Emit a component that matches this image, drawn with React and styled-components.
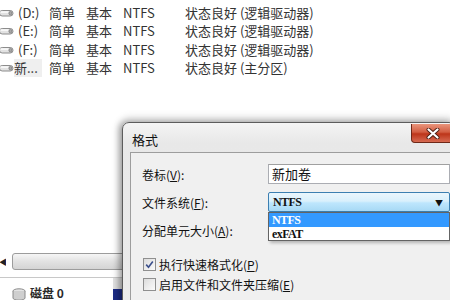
import React from "react";
import styled, { createGlobalStyle } from "styled-components";

const volumes = [
  { name: "(D:)", status: "状态良好 (逻辑驱动器)" },
  { name: "(E:)", status: "状态良好 (逻辑驱动器)" },
  { name: "(F:)", status: "状态良好 (逻辑驱动器)" },
  { name: "新...", status: "状态良好 (主分区)", selected: true },
];

const GlobalStyle = createGlobalStyle`
  body {
    margin: 0;
    background: #fff;
    font-family: "Noto Sans CJK SC", "Noto Sans", sans-serif;
  }
`;

const DriveIcon = () => (
  <svg width="15" height="8" viewBox="0 0 15 8">
    <rect x="0.5" y="1.5" width="13.5" height="5.5" rx="2.7" fill="#e2e2e2" stroke="#8c8c8c" />
    <rect x="1.5" y="2.2" width="8" height="1.8" fill="#f7f7f7" />
    <ellipse cx="11.4" cy="4.2" rx="1.5" ry="1.8" fill="#a8a8a8" stroke="#6c6c6c" strokeWidth="0.6" />
  </svg>
);

const DiskIcon = () => (
  <svg width="14" height="12" viewBox="0 0 14 12">
    <ellipse cx="7" cy="3" rx="6" ry="2.2" fill="#e4e4e4" stroke="#8a8a8a" />
    <path d="M1 3 V10 A6 2.2 0 0 0 13 10 V3" fill="#cfcfcf" stroke="#8a8a8a" />
  </svg>
);

const CloseGlyph = () => (
  <svg width="14" height="11" viewBox="0 0 14 11">
    <path d="M2.5 1.5 L11.5 9.5 M11.5 1.5 L2.5 9.5" stroke="#4a1e12" strokeWidth="4" strokeLinecap="round" />
    <path d="M2.5 1.5 L11.5 9.5 M11.5 1.5 L2.5 9.5" stroke="#fff" strokeWidth="2.2" strokeLinecap="round" />
  </svg>
);

const CheckGlyph = () => (
  <svg width="9" height="9" viewBox="0 0 9 9">
    <path d="M1.2 4.6 L3.5 7.2 L7.8 1.4" fill="none" stroke="#3b4f8c" strokeWidth="1.6" />
  </svg>
);

const App = () => {
  return (
    <Screen>
      <GlobalStyle />
      <VolumeList>
        {volumes.map((v) => (
          <VolumeRow key={v.name}>
            <DriveIcon />
            <VolumeName selected={v.selected}>{v.name}</VolumeName>
            <Cell>简单</Cell>
            <Cell>基本</Cell>
            <Cell>NTFS</Cell>
            <Cell>{v.status}</Cell>
          </VolumeRow>
        ))}
      </VolumeList>

      <ScrollBar>
        <ScrollArrow>◀</ScrollArrow>
        <ScrollThumb />
      </ScrollBar>

      <DiskRow>
        <DiskLabel>
          <DiskIcon />
          <span>磁盘 0</span>
        </DiskLabel>
        <Partition />
      </DiskRow>

      <Dialog>
        <TitleBar>
          <Title>格式</Title>
          <CloseButton>
            <CloseGlyph />
          </CloseButton>
        </TitleBar>
        <Body>
          <FormGrid>
            <Label>
              卷标(<u>V</u>):
            </Label>
            <TextBox>新加卷</TextBox>
            <Label>
              文件系统(<u>F</u>):
            </Label>
            <Select>
              <SelectValue>NTFS</SelectValue>
              <SelectArrow>▼</SelectArrow>
              <DropList>
                <DropItem active>NTFS</DropItem>
                <DropItem>exFAT</DropItem>
              </DropList>
            </Select>
            <Label>
              分配单元大小(<u>A</u>):
            </Label>
            <div />
          </FormGrid>
          <Options>
            <Option>
              <CheckBox>
                <CheckGlyph />
              </CheckBox>
              <span>
                执行快速格式化(<u>P</u>)
              </span>
            </Option>
            <Option>
              <CheckBox />
              <span>
                启用文件和文件夹压缩(<u>E</u>)
              </span>
            </Option>
          </Options>
        </Body>
      </Dialog>
    </Screen>
  );
};

const Screen = styled.div`
  position: relative;
  width: 450px;
  height: 300px;
  overflow: hidden;
  background: #fff;
  color: #2a2a2a;
`;

const VolumeList = styled.div`
  display: flex;
  flex-direction: column;
  padding-top: 4px;
`;

const VolumeRow = styled.div`
  display: grid;
  grid-template-columns: 16px 33px 37px 37px 62px 1fr;
  align-items: center;
  height: 18.3px;
  font-size: 13px;
  color: #333;
  white-space: nowrap;
  svg {
    margin-left: -1px;
  }
`;

const Cell = styled.span`
  line-height: 18px;
`;

const VolumeName = styled.span`
  line-height: 18px;
  margin-left: ${({ selected }) => (selected ? "-2px" : "2px")};
  background: ${({ selected }) => (selected ? "#efefef" : "transparent")};
  width: ${({ selected }) => (selected ? "28px" : "auto")};
`;

const ScrollBar = styled.div`
  display: flex;
  align-items: center;
  gap: 6px;
  margin-top: 176px;
  height: 17px;
`;

const ScrollArrow = styled.span`
  font-size: 8px;
  color: #222;
  width: 6px;
  overflow: hidden;
  text-indent: -1px;
`;

const ScrollThumb = styled.div`
  flex: 1;
  height: 15px;
  border: 1px solid #9c9c9c;
  border-radius: 3px;
  background: linear-gradient(#f6f6f6, #e2e2e2 50%, #d4d4d4);
`;

const DiskRow = styled.div`
  display: grid;
  grid-template-columns: 113px 1fr;
  margin-top: 7px;
  border-top: 1px solid #c8c8c8;
  height: 30px;
`;

const DiskLabel = styled.div`
  display: flex;
  align-items: flex-start;
  gap: 4px;
  padding: 8px 0 0 12px;
  font-size: 12px;
  font-weight: 700;
  line-height: 14px;
  svg {
    margin-top: 2px;
  }
`;

const Partition = styled.div`
  border-top: 11px solid #e2e2e2;
  background: #1d2c86;
`;

const Dialog = styled.div`
  position: absolute;
  left: 122px;
  top: 122px;
  width: 334px;
  height: 200px;
  box-sizing: border-box;
  border: 1px solid #5c5c5c;
  border-radius: 7px 7px 0 0;
  background: linear-gradient(#f4f4f4, #e8e8e8 20px, #ececec);
  box-shadow: -3px 0 7px rgba(0, 0, 0, 0.35), 0 -4px 8px rgba(0, 0, 0, 0.15);
  padding-left: 7px;
`;

const TitleBar = styled.div`
  display: flex;
  align-items: flex-start;
  justify-content: space-between;
  height: 29px;
`;

const Title = styled.span`
  font-size: 13px;
  line-height: 16px;
  padding: 9px 0 0 2px;
  color: #111;
`;

const CloseButton = styled.span`
  display: flex;
  align-items: center;
  justify-content: center;
  flex: 0 0 44px;
  height: 19px;
  margin-top: 1px;
  box-sizing: border-box;
  border: 1px solid #6e2818;
  border-top: 0;
  border-radius: 0 0 4px 4px;
  background: #c9472b linear-gradient(#e9957c, #d25e42 45%, #bd3519 55%, #d66a52);
`;

const Body = styled.div`
  height: 100%;
  border-top: 1px solid #9d9d9d;
  border-left: 1px solid #9d9d9d;
  background: #f0f0f0;
  padding: 11px 0 0 11px;
  font-size: 12px;
  color: #111;
`;

const FormGrid = styled.div`
  display: grid;
  grid-template-columns: 126px 182px;
  grid-auto-rows: 20px;
  row-gap: 8px;
  align-items: center;
`;

const Label = styled.span`
  line-height: 16px;
  padding-top: 1px;
  white-space: nowrap;
`;

const TextBox = styled.div`
  height: 20px;
  box-sizing: border-box;
  border: 1px solid #abadb3;
  border-top-color: #a0a0a0;
  background: #fff;
  padding-left: 3px;
  font-size: 13px;
  line-height: 18px;
`;

const Select = styled.div`
  position: relative;
  height: 20px;
  box-sizing: border-box;
  border: 1px solid #3c7fb1;
  border-radius: 2px;
  background: linear-gradient(#eaf6fd, #d9f0fc 45%, #bee6fd 55%, #a7d9f5);
  display: flex;
  align-items: center;
  padding: 0 6px 0 4px;
`;

const SelectValue = styled.span`
  font-family: "Liberation Serif", serif;
  font-weight: 700;
  font-size: 12px;
  letter-spacing: -0.6px;
  color: #111;
`;

const SelectArrow = styled.span`
  margin-left: auto;
  font-size: 8px;
  color: #111;
`;

const DropList = styled.div`
  position: absolute;
  top: 19px;
  left: -1px;
  right: -1px;
  height: 29px;
  box-sizing: border-box;
  border: 1px solid #646464;
  background: #fff;
  box-shadow: 2px 2px 3px rgba(0, 0, 0, 0.25);
`;

const DropItem = styled.div`
  height: 14px;
  line-height: 14px;
  padding-left: 3px;
  font-family: "Liberation Serif", serif;
  font-weight: 700;
  font-size: 12px;
  letter-spacing: -0.6px;
  background: ${({ active }) => (active ? "#3399ff" : "transparent")};
  color: ${({ active }) => (active ? "#fff" : "#111")};
`;

const Options = styled.div`
  display: flex;
  flex-direction: column;
  gap: 2px;
  margin-top: 15px;
`;

const Option = styled.label`
  display: flex;
  align-items: center;
  gap: 3px;
  height: 18px;
  padding-left: 1px;
  white-space: nowrap;
`;

const CheckBox = styled.span`
  width: 13px;
  height: 13px;
  box-sizing: border-box;
  border: 1px solid #8f8f8f;
  background: linear-gradient(135deg, #dcdcdc, #fbfbfb);
  display: flex;
  align-items: center;
  justify-content: center;
`;

export default App;
